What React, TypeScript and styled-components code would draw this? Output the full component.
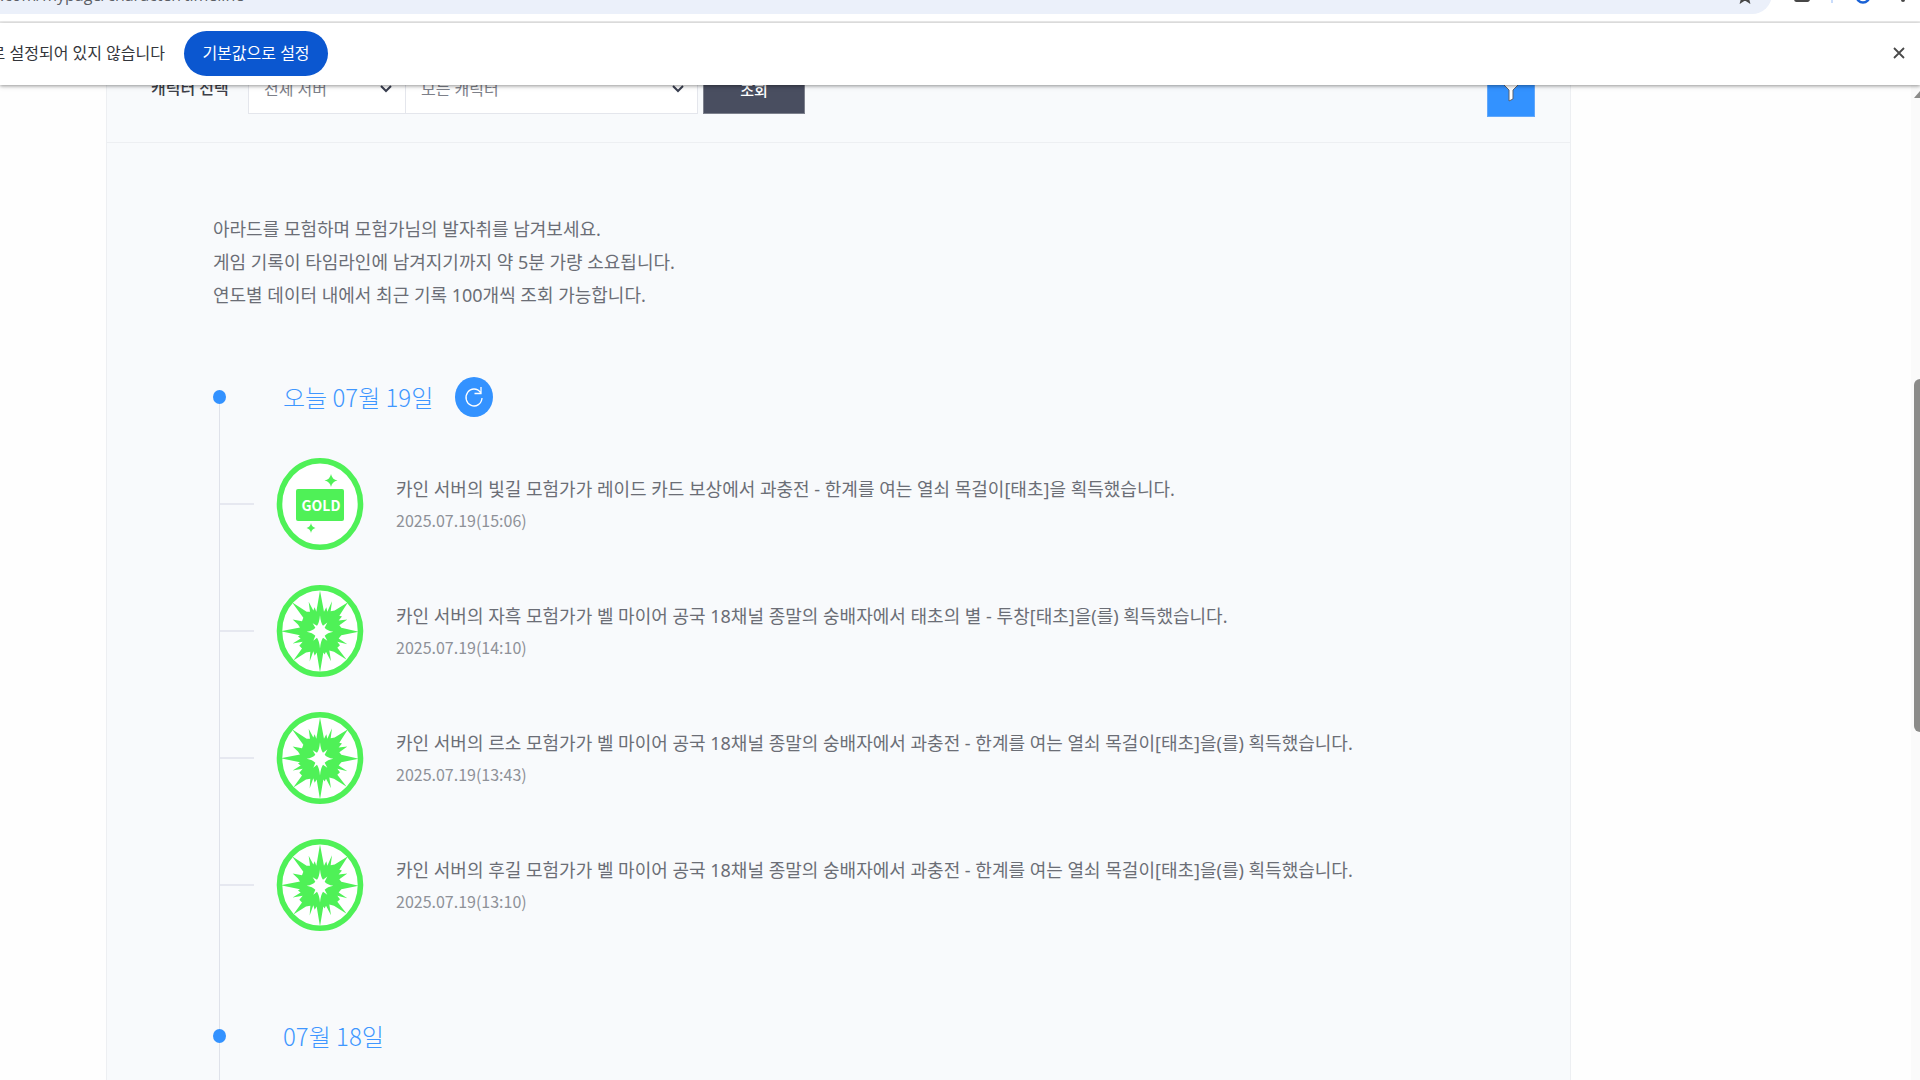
import React from "react";
import styled, { createGlobalStyle } from "styled-components";

const GlobalStyle = createGlobalStyle`
  * { box-sizing: border-box; }
  html, body, #root { height: 100%; }
  body {
    margin: 0;
    overflow: hidden;
    background: #fefefe;
    font-family: "Noto Sans", "Noto Sans CJK KR", sans-serif;
    color: #6b6e76;
  }
  button, select { font-family: inherit; }
`;

const Shell = styled.div`
  display: flex;
  flex-direction: column;
  height: 100vh;
  overflow: hidden;
`;

const Toolbar = styled.header`
  display: flex;
  align-items: flex-end;
  height: 23px;
  padding-bottom: 7px;
  border-bottom: 2px solid #ebebeb;
  background: #fff;
  flex: none;
  overflow: hidden;
`;

const AddressBar = styled.div`
  flex: 1;
  display: flex;
  align-items: flex-end;
  justify-content: space-between;
  height: 40px;
  padding: 0 20px 9px 0;
  border-radius: 0 20px 20px 0;
  background: #ebf0fa;
`;

const Url = styled.span`
  font-family: "Open Sans", sans-serif;
  font-size: 16px;
  line-height: 20px;
  color: #5c5f66;
  white-space: nowrap;
`;

const ToolbarIcons = styled.div`
  flex: none;
  width: 148px;
  height: 40px;
  svg { display: block; }
`;

const InfoBar = styled.aside`
  position: relative;
  z-index: 2;
  flex: none;
  display: flex;
  align-items: center;
  height: 62px;
  padding: 0 11px 2px 0;
  background: #fff;
  box-shadow: 0 1px 3px rgba(0, 0, 0, 0.3), 0 2px 5px rgba(0, 0, 0, 0.12);
`;

const InfoClip = styled.div`
  display: flex;
  justify-content: flex-end;
  width: 165px;
  overflow: hidden;
`;

const InfoText = styled.p`
  flex: none;
  margin: 0;
  font-size: 16px;
  line-height: 24px;
  color: #33353a;
  white-space: nowrap;
`;

const DefaultButton = styled.button`
  height: 45px;
  width: 144px;
  margin-left: 19px;
  padding: 0;
  border: 0;
  border-radius: 23px;
  background: #0b57d0;
  color: #fff;
  font-size: 16px;
  line-height: 24px;
`;

const CloseButton = styled.button`
  display: grid;
  place-items: center;
  width: 20px;
  height: 20px;
  margin-left: auto;
  padding: 0;
  border: 0;
  background: none;
  color: #4a4a4a;
`;

const Viewport = styled.div`
  flex: 1;
  min-height: 0;
  display: flex;
  overflow: hidden;
`;

const Page = styled.main`
  flex: 1;
  min-width: 0;
  padding: 0 340px 0 106px;
`;

const Panel = styled.section`
  height: 100%;
  overflow: hidden;
  border: solid #edeff2;
  border-width: 0 1px;
  background: #f8fafc;
`;

const FilterBar = styled.form`
  display: flex;
  align-items: flex-end;
  height: 58px;
  padding: 0 35px 28px 44px;
  border-bottom: 1px solid #edeff2;
`;

const FilterLabel = styled.label`
  width: 97px;
  height: 50px;
  font-size: 16px;
  line-height: 48px;
  font-weight: 500;
  color: #3c3f48;
`;

const SelectBox = styled.div<{ $width: number; $joined?: boolean }>`
  position: relative;
  flex: none;
  width: ${(p) => p.$width}px;
  height: 50px;
  border: 1px solid #e4e6ec;
  border-left-width: ${(p) => (p.$joined ? 0 : 1)}px;
  background: #fff;
`;

const Select = styled.select`
  appearance: none;
  width: 100%;
  height: 48px;
  padding: 0 40px 0 15px;
  border: 0;
  background: transparent;
  color: #7d8089;
  font-size: 16px;
  line-height: 48px;
`;

const SelectArrow = styled.svg`
  position: absolute;
  right: 13px;
  top: 20px;
  pointer-events: none;
`;

const SearchButton = styled.button`
  width: 102px;
  height: 50px;
  margin-left: 5px;
  padding: 0;
  border: 1px solid #7d818d;
  background: #494e60;
  color: #fff;
  font-size: 15px;
  font-weight: 500;
`;

const FilterButton = styled.button`
  display: grid;
  place-items: center;
  width: 48px;
  height: 50px;
  margin: 0 0 -3px auto;
  padding: 0;
  border: 1px solid #62a8fb;
  background: #3392ff;
`;

const Intro = styled.p`
  margin: 0;
  padding: 70px 0 0 106px;
  font-size: 18px;
  line-height: 33px;
`;

const Timeline = styled.div`
  display: grid;
  margin: 85px 0 0 112px;
  border-left: 1px solid #dfe2ea;
`;

const Day = styled.section`
  display: flex;
  flex-direction: column;
  padding-bottom: 105px;
`;

const DayHead = styled.header`
  display: flex;
  align-items: center;
  height: 38px;
  margin: -19px 0 0 -7px;
`;

const Dot = styled.span`
  width: 13px;
  height: 14px;
  border-radius: 50%;
  background: #3392ff;
`;

const DayTitle = styled.h2`
  margin: 0 22px 0 57px;
  font-family: "Noto Sans CJK KR", sans-serif;
  font-size: 24px;
  line-height: 36px;
  font-weight: 300;
  color: #3f97ff;
`;

const RefreshButton = styled.button`
  display: grid;
  place-items: center;
  width: 38px;
  height: 40px;
  padding: 0;
  border: 0;
  border-radius: 50%;
  background: #3392ff;
`;

const Records = styled.ul`
  display: grid;
  gap: 35px;
  margin: 0;
  padding: 42px 0 0;
  list-style: none;
`;

const Record = styled.li`
  display: flex;
  align-items: center;
  height: 92px;
`;

const Branch = styled.span`
  width: 34px;
  height: 2px;
  margin-right: 22px;
  background: #e6e8f0;
`;

const Badge = styled.svg`
  flex: none;
  width: 88px;
  height: 92px;
`;

const RecordBody = styled.div`
  margin-left: 32px;
`;

const Message = styled.p`
  margin: 0;
  font-size: 18px;
  line-height: 32px;
  white-space: nowrap;
`;

const Stamp = styled.time`
  display: block;
  font-family: "Noto Sans CJK KR", sans-serif;
  font-size: 16px;
  line-height: 30px;
  color: #8e9198;
`;

const ScrollTrack = styled.div`
  flex: none;
  width: 9px;
  padding: 6px 0 0 3px;
  background: #fafafa;
`;

const ScrollArrow = styled.svg`
  display: block;
`;

const ScrollThumb = styled.div`
  height: 353px;
  margin-top: 281px;
  border-radius: 6px 0 0 6px;
  background: #8b8b89;
`;

const GREEN = "#4ff157";

function Ring({ children }: { children: React.ReactNode }) {
  return (
    <Badge viewBox="0 0 88 92" aria-hidden="true">
      <ellipse cx="44" cy="46" rx="40.5" ry="43.2" fill="#fff" stroke={GREEN} strokeWidth="5.6" />
      {children}
    </Badge>
  );
}

function GoldBadge() {
  return (
    <Ring>
      <rect x="20" y="31" width="48" height="32" rx="2" fill={GREEN} />
      <text x="45" y="53" textAnchor="middle" fill="#fff" fontFamily="Noto Sans CJK KR, sans-serif" fontSize="14" fontWeight="700">
        GOLD
      </text>
      <path d="M55 16Q56 21.500 61.500 22.500Q56 23.500 55 29Q54 23.500 48.500 22.500Q54 21.500 55 16Z" fill={GREEN} />
      <path d="M35 65Q35.600 69 39.500 70Q35.600 71 35 75Q34.400 71 30.500 70Q34.400 69 35 65Z" fill={GREEN} />
    </Ring>
  );
}

function BurstBadge() {
  return (
    <Ring>
      <g transform="translate(-16 -14.500) scale(.3333)">
        <path
          fill={GREEN}
          d="M180 60L192 124L199 110L202 124L216 92L212 122L224 120L264 95L238 136L246 138L236 150L262 147L238 164L244 172L296 184L244 194L236 204L262 221L232 214L240 224L232 232L260 268L222 244L208 240L213 272L198 244L194 252L190 246L180 306L170 246L164 256L160 242L149 273L151 244L138 246L100 270L126 234L118 226L128 214L98 219L122 204L114 198L120 194L62 182L120 171L114 162L98 147L126 152L130 142L96 95L140 124L150 124L146 94L160 120L164 110L169 124Z"
        />
        <path fill="#fff" d="M180 134Q182 156 189 166L202 156L194 172Q202 181 220 184Q202 187 194 196L202 211L189 202Q182 212 180 234Q178 212 171 202L160 211L166 196Q158 187 140 184Q158 181 166 172L158 158L171 166Q178 156 180 134Z" />
      </g>
    </Ring>
  );
}

type Entry = { kind: "gold" | "burst"; text: string; time: string };

const entries: Entry[] = [
  { kind: "gold", text: "카인 서버의 빛길 모험가가 레이드 카드 보상에서 과충전 - 한계를 여는 열쇠 목걸이[태초]을 획득했습니다.", time: "2025.07.19(15:06)" },
  { kind: "burst", text: "카인 서버의 자흑 모험가가 벨 마이어 공국 18채널 종말의 숭배자에서 태초의 별 - 투창[태초]을(를) 획득했습니다.", time: "2025.07.19(14:10)" },
  { kind: "burst", text: "카인 서버의 르소 모험가가 벨 마이어 공국 18채널 종말의 숭배자에서 과충전 - 한계를 여는 열쇠 목걸이[태초]을(를) 획득했습니다.", time: "2025.07.19(13:43)" },
  { kind: "burst", text: "카인 서버의 후길 모험가가 벨 마이어 공국 18채널 종말의 숭배자에서 과충전 - 한계를 여는 열쇠 목걸이[태초]을(를) 획득했습니다.", time: "2025.07.19(13:10)" },
];

function Arrow() {
  return (
    <SelectArrow width="12" height="8" viewBox="0 0 12 8" fill="none" stroke="#3a3f50" strokeWidth="2" aria-hidden="true">
      <path d="M1 1L6 6L11 1" />
    </SelectArrow>
  );
}

export default function App() {
  return (
    <>
      <GlobalStyle />
      <Shell>
        <Toolbar>
          <AddressBar>
            <Url>.com/mypage/character/timeline</Url>
            <svg width="14" height="14" viewBox="0 0 14 14" fill="none" stroke="#474747" strokeWidth="1.8" aria-hidden="true">
              <path d="M7 -1L8.700 3L13 3.400L9.700 6.200L11 11L7 8.500L3 11L4.300 6.200L1 3.400L5.300 3Z" />
            </svg>
          </AddressBar>
          <ToolbarIcons>
            <svg width="148" height="40" viewBox="0 -26 148 40" fill="none" aria-hidden="true">
              <rect x="23" y="-13" width="14" height="14" rx="1.500" fill="#b0b0b0" stroke="#474747" strokeWidth="1.800" />
              <path d="M60 -12V3" stroke="#c9dcfb" strokeWidth="2" />
              <circle cx="91" cy="-4" r="6.500" stroke="#1a62d6" strokeWidth="2.400" />
              <circle cx="131" cy="0" r="2" fill="#474747" />
            </svg>
          </ToolbarIcons>
        </Toolbar>
        <InfoBar>
          <InfoClip>
            <InfoText>Chrome이 기본 브라우저로 설정되어 있지 않습니다</InfoText>
          </InfoClip>
          <DefaultButton type="button">기본값으로 설정</DefaultButton>
          <CloseButton type="button" aria-label="닫기">
            <svg width="12" height="12" viewBox="0 0 12 12" stroke="currentColor" strokeWidth="1.800">
              <path d="M1 1L11 11M11 1L1 11" />
            </svg>
          </CloseButton>
        </InfoBar>
        <Viewport>
          <Page>
            <Panel>
              <FilterBar>
                <FilterLabel htmlFor="server">캐릭터 선택</FilterLabel>
                <SelectBox $width={158}>
                  <Select id="server"><option>전체 서버</option></Select>
                  <Arrow />
                </SelectBox>
                <SelectBox $width={292} $joined>
                  <Select aria-label="캐릭터"><option>모든 캐릭터</option></Select>
                  <Arrow />
                </SelectBox>
                <SearchButton type="button">조회</SearchButton>
                <FilterButton type="button" aria-label="필터">
                  <svg width="22" height="22" viewBox="0 0 22 22" fill="#fff" stroke="#5a6270" strokeWidth="1">
                    <path d="M1 1H21L13 9V18L9 20V9Z" />
                  </svg>
                </FilterButton>
              </FilterBar>
              <Intro>
                아라드를 모험하며 모험가님의 발자취를 남겨보세요.<br />
                게임 기록이 타임라인에 남겨지기까지 약 5분 가량 소요됩니다.<br />
                연도별 데이터 내에서 최근 기록 100개씩 조회 가능합니다.
              </Intro>
              <Timeline>
                <Day>
                  <DayHead>
                    <Dot />
                    <DayTitle>오늘 07월 19일</DayTitle>
                    <RefreshButton type="button" aria-label="새로고침">
                      <svg width="20" height="22" viewBox="0 0 20 22" fill="none" stroke="#fff" strokeWidth="1.300">
                        <path d="M18 12A8 8.500 0 1 1 16.500 6.500M17 1V7.500H10.500" />
                      </svg>
                    </RefreshButton>
                  </DayHead>
                  <Records>
                    {entries.map((e) => (
                      <Record key={e.time}>
                        <Branch />
                        {e.kind === "gold" ? <GoldBadge /> : <BurstBadge />}
                        <RecordBody>
                          <Message>{e.text}</Message>
                          <Stamp>{e.time}</Stamp>
                        </RecordBody>
                      </Record>
                    ))}
                  </Records>
                </Day>
                <Day>
                  <DayHead>
                    <Dot />
                    <DayTitle>07월 18일</DayTitle>
                  </DayHead>
                </Day>
              </Timeline>
            </Panel>
          </Page>
          <ScrollTrack>
            <ScrollArrow width="6" height="7" viewBox="0 0 6 7" aria-hidden="true">
              <path d="M0 7L6 0V7Z" fill="#8b8b89" />
            </ScrollArrow>
            <ScrollThumb />
          </ScrollTrack>
        </Viewport>
      </Shell>
    </>
  );
}
